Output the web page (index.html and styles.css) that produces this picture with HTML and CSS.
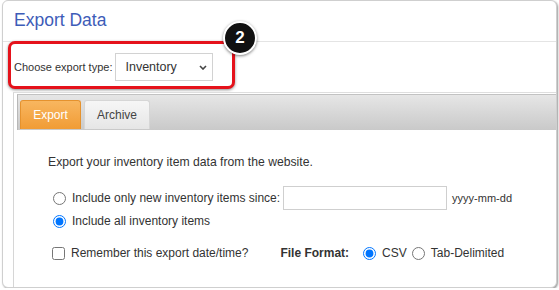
FILE: index.html
```html
<!DOCTYPE html>
<html lang="en">
<head>
    <meta charset="UTF-8">
    <meta name="viewport" content="width=device-width, initial-scale=1.0">
    <title>Export Data</title>
    <link rel="stylesheet" href="styles.css">
</head>
<body>
    <div class="card">
        <h1 class="title">Export Data</h1>

        <div class="highlight">
            <label for="exportType" class="type-label">Choose export type:</label>
            <div class="select" id="exportType">
                <span>Inventory</span>
                <svg width="8" height="5" viewBox="0 0 8 5"><path d="M1 1 L4 4 L7 1" fill="none" stroke="#444" stroke-width="1.6"/></svg>
            </div>
        </div>
        <div class="badge">2</div>

        <div class="section">
            <div class="tabs">
                <div class="tab active">Export</div>
                <div class="tab">Archive</div>
            </div>
            <div class="content">
                <p class="intro">Export your inventory item data from the website.</p>

                <div class="row row-since">
                    <input type="radio" name="range" id="rangeNew">
                    <label for="rangeNew">Include only new inventory items since:</label>
                    <input type="text" class="date">
                    <span class="hint">yyyy-mm-dd</span>
                </div>
                <div class="row row-all">
                    <input type="radio" name="range" id="rangeAll" checked>
                    <label for="rangeAll">Include all inventory items</label>
                </div>
                <div class="row row-options">
                    <input type="checkbox" id="remember">
                    <label for="remember">Remember this export date/time?</label>
                    <span class="format-label">File Format:</span>
                    <input type="radio" name="format" id="csv" class="format-radio" checked>
                    <label for="csv">CSV</label>
                    <input type="radio" name="format" id="tab" class="format-radio">
                    <label for="tab">Tab-Delimited</label>
                </div>
            </div>
        </div>
    </div>
</body>
</html>
```

FILE: styles.css
```css
body {
    margin: 0;
    font-family: "Liberation Sans", Arial, sans-serif;
    color: #333;
    background-color: #fff;
}
.card {
    position: relative;
    box-sizing: border-box;
    width: 555px;
    height: 288px;
    margin-left: 2px;
    border: 1px solid #cfcfcf;
    border-radius: 6px;
    box-shadow: 1px 1px 2px rgba(0, 0, 0, 0.4);
    overflow: hidden;
    background-color: #fff;
}
.title {
    margin: 0;
    height: 37px;
    padding: 0 0 3px 11px;
    border-bottom: 1px solid #e4e4e4;
    font-size: 17.5px;
    font-weight: normal;
    line-height: 38px;
    color: #3d5cb8;
}
.highlight {
    box-sizing: border-box;
    display: flex;
    align-items: center;
    width: 227px;
    height: 48px;
    margin: -1px 0 0 5px;
    padding: 4px 0 0 3px;
    border: 3px solid #e5121b;
    border-radius: 7px;
    box-shadow: 0 1px 3px rgba(0, 0, 0, 0.45);
    background-color: #fff;
}
.type-label {
    font-size: 11px;
    color: #333;
}
.select {
    box-sizing: border-box;
    display: flex;
    align-items: center;
    justify-content: space-between;
    width: 98px;
    height: 28px;
    margin-left: 3px;
    padding: 0 5px 0 9px;
    border: 1px solid #d2d2d2;
    font-size: 12.5px;
    color: #333;
}
.badge {
    position: absolute;
    left: 220px;
    top: 20px;
    box-sizing: border-box;
    width: 34px;
    height: 34px;
    border: 2px solid #fff;
    border-radius: 50%;
    background-color: #111;
    box-shadow: 0 1px 3px rgba(0, 0, 0, 0.5);
    color: #fff;
    font-size: 17px;
    font-weight: bold;
    line-height: 30px;
    text-align: center;
}
.section {
    height: 200px;
    margin: 3px 0 0 10px;
    border-top: 1px solid #dedede;
    border-left: 1px solid #d6d6d6;
}
.tabs {
    box-sizing: border-box;
    display: flex;
    gap: 3px;
    height: 36px;
    margin: 1px 0 0 3px;
    padding: 5px 0 0 2px;
    border-top: 1px solid #c2c2c2;
    border-left: 1px solid #b8b8b8;
    background: linear-gradient(#e6e6e6, #c9c9c9);
}
.tab {
    box-sizing: border-box;
    height: 29px;
    padding: 0 12px;
    border: 1px solid #d6d6d6;
    border-bottom: none;
    border-radius: 3px 3px 0 0;
    background: linear-gradient(#f6f6f6, #e6e6e6);
    font-size: 12px;
    line-height: 28px;
    color: #444;
}
.tab.active {
    width: 61px;
    text-align: center;
    padding: 0;
    border-color: #e5922e;
    background: linear-gradient(#f8b660, #f19c35);
    color: #fff;
}
.content {
    padding: 25px 0 0 34px;
    font-size: 12px;
}
.intro {
    margin: 0;
    font-size: 12.2px;
    line-height: 14px;
}
.row {
    display: flex;
    align-items: center;
}
.row input[type="radio"],
.row input[type="checkbox"] {
    margin: 0 6px 0 5px;
}
.row input[type="checkbox"] {
    margin-left: 4px;
}
.row-since {
    height: 24px;
    margin-top: 17px;
}
.row-all {
    height: 18px;
    margin-top: 2px;
}
.row-options {
    height: 18px;
    margin-top: 14px;
}
.date {
    box-sizing: border-box;
    width: 164px;
    height: 24px;
    margin-left: 3px;
    border: 1px solid #cfcfcf;
}
.hint {
    margin-left: 5px;
    font-size: 11px;
}
.format-label {
    margin: 0 9px 0 32px;
    font-weight: bold;
}
.row .format-radio {
    margin: 0 6px 0 6px;
}
```
